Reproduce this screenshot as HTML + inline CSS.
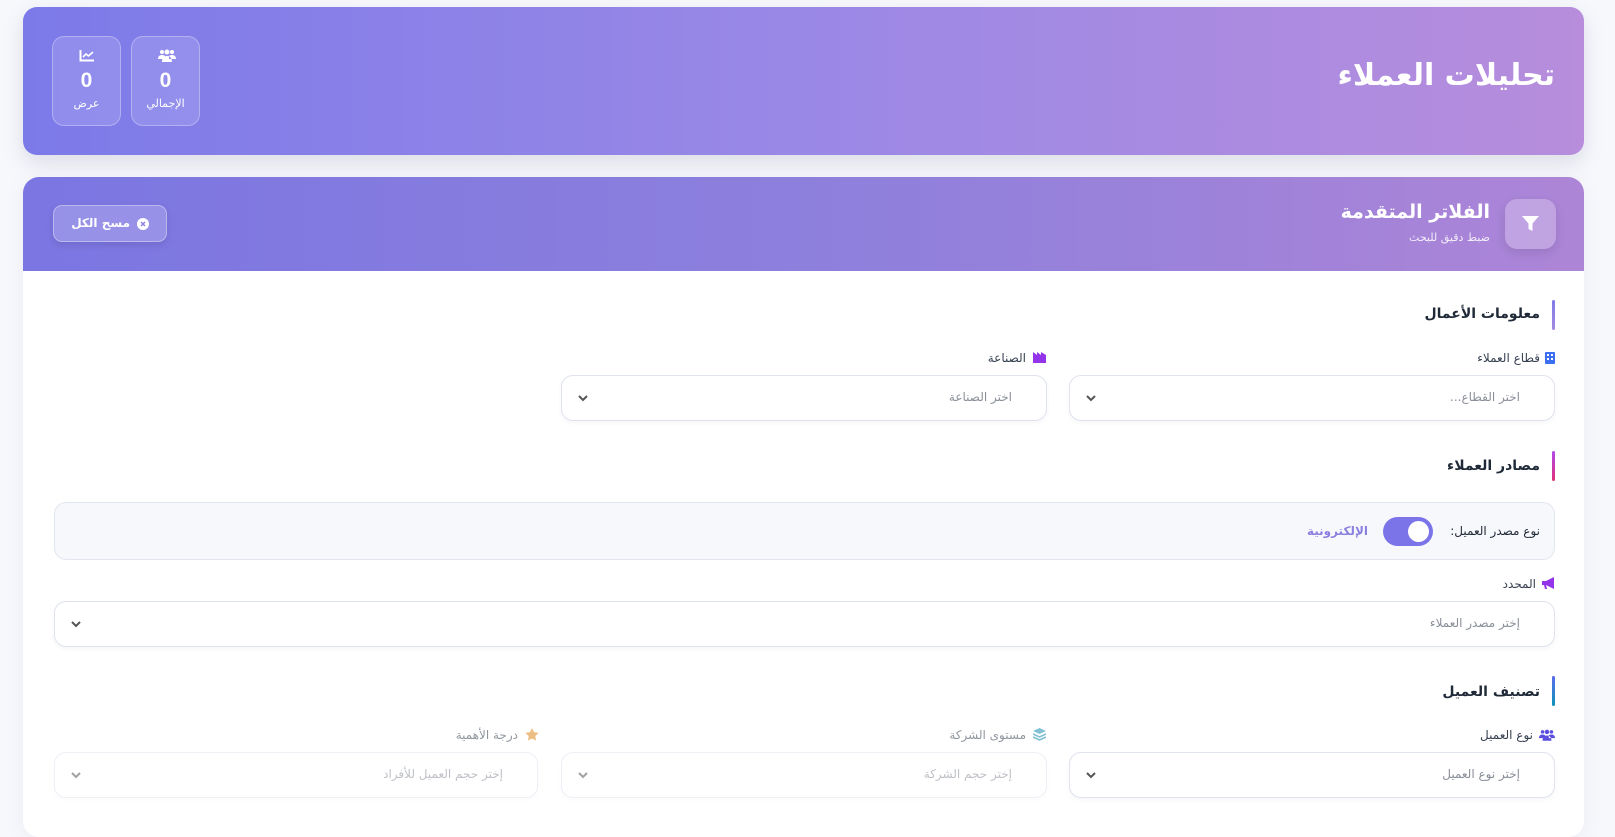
<!DOCTYPE html>
<html lang="ar" dir="rtl">
<head>
<meta charset="utf-8">
<style>
*{box-sizing:border-box;margin:0;padding:0}
body{width:1615px;height:810px;overflow:hidden;background:#f7f8fc;font-family:"DejaVu Sans","Liberation Sans",sans-serif;position:relative;color:#1f2937}
.abs{position:absolute}
.hdr{left:23px;top:7px;width:1561px;height:148px;border-radius:14px;background:linear-gradient(90deg,#7c7ae9 0%,#9a88e6 50%,#b78ddc 100%);box-shadow:0 8px 20px rgba(100,100,140,.18)}
.title{right:60px;top:58px;font-size:30px;font-weight:bold;color:#fff;direction:rtl}
.stat{top:36px;width:69px;height:90px;border-radius:12px;background:rgba(255,255,255,.14);border:1px solid rgba(255,255,255,.3);color:#fff;text-align:center}
.stat .n{position:absolute;top:32px;left:0;right:0;font-size:21px;font-weight:bold;font-family:"Liberation Sans",sans-serif}
.stat .l{position:absolute;top:60px;left:0;right:0;font-size:11px}
.stat svg{position:absolute;top:12px;left:26px}
.card{left:23px;top:177px;width:1561px;height:660px;border-radius:16px;background:#fff;overflow:hidden;box-shadow:0 4px 20px rgba(100,100,140,.08)}
.fh{left:0;top:0;width:1561px;height:94px;background:linear-gradient(90deg,#7b76e2 0%,#8f80dc 55%,#ad85d7 100%)}
.funnel{right:28px;top:22px;width:51px;height:50px;border-radius:12px;background:rgba(255,255,255,.25);box-shadow:0 4px 10px rgba(0,0,0,.1)}
.ft{right:94px;top:24px;font-size:19px;font-weight:bold;color:#fff}
.fs{right:94px;top:54px;font-size:11px;color:rgba(255,255,255,.85)}
.clr{left:30px;top:28px;width:114px;height:37px;border-radius:9px;background:rgba(255,255,255,.2);border:1px solid rgba(255,255,255,.35);color:#fff;font-size:12px;font-weight:bold;box-shadow:0 3px 8px rgba(0,0,0,.1)}
.sec{right:60px;font-size:14px;font-weight:bold;color:#1f2937}
.bar{left:1552px;width:3px;height:30px;border-radius:2px}
.lbl{font-size:12px;color:#374151;white-space:nowrap}
.sel{height:46px;width:486px;border:1px solid #dfe3ee;border-radius:12px;background:#fff;box-shadow:0 2px 4px rgba(100,110,160,.06)}
.sel .ph{position:absolute;right:34px;top:14px;font-size:12px;color:#8a8f99}
.sel .ch{position:absolute;left:16px;top:18px}
.dim{opacity:.55}
</style>
</head>
<body>
<div class="abs hdr"></div>
<div class="abs title">تحليلات العملاء</div>
<div class="abs stat" style="left:131px">
<svg width="18" height="13" viewBox="0 0 18 13"><circle cx="4" cy="3" r="2" fill="#fff"/><circle cx="14" cy="3" r="2" fill="#fff"/><circle cx="9" cy="3" r="2.5" fill="#fff"/><path d="M0 10c0-3 2-4 4-4s3 1 3 1v3zM18 10c0-3-2-4-4-4s-3 1-3 1v3zM4 13c0-4 2-6 5-6s5 2 5 6z" fill="#fff"/></svg>
<div class="n">0</div><div class="l">الإجمالي</div></div>
<div class="abs stat" style="left:52px">
<svg width="16" height="13" viewBox="0 0 16 13"><path d="M1.5 1v10.5H15" stroke="#fff" stroke-width="2" fill="none"/><path d="M4 8l3-3 2.5 2L14 3" stroke="#fff" stroke-width="1.6" fill="none"/></svg>
<div class="n">0</div><div class="l">عرض</div></div>

<div class="abs card">
<div class="abs fh"></div>
<div class="abs funnel"><svg style="position:absolute;left:17px;top:17px" width="17" height="16" viewBox="0 0 17 16"><path d="M0 0h17l-6.5 7.5V15l-4-2V7.5z" fill="#fff"/></svg></div>
<div class="abs ft">الفلاتر المتقدمة</div>
<div class="abs fs">ضبط دقيق للبحث</div>
<div class="abs clr"><svg style="position:absolute;right:17px;top:12px" width="12" height="12" viewBox="0 0 12 12"><circle cx="6" cy="6" r="6" fill="#fff"/><path d="M4 4l4 4M8 4l-4 4" stroke="#8a7fe0" stroke-width="1.4"/></svg><span style="position:absolute;right:36px;top:10px">مسح الكل</span></div>
</div>

<!-- section 1 -->
<div class="abs bar" style="top:300px;background:linear-gradient(#7f7be8,#a48be0)"></div>
<div class="abs sec" style="top:306px;right:75px">معلومات الأعمال</div>

<svg class="abs" style="left:1545px;top:352px" width="10" height="12" viewBox="0 0 10 12"><rect width="10" height="12" rx="1" fill="#3b6ef0"/><rect x="2" y="2" width="2" height="2" fill="#fff"/><rect x="6" y="2" width="2" height="2" fill="#fff"/><rect x="2" y="6" width="2" height="2" fill="#fff"/><rect x="6" y="6" width="2" height="2" fill="#fff"/></svg>
<div class="abs lbl" style="right:75px;top:351px">قطاع العملاء</div>
<div class="abs sel" style="left:1069px;top:375px"><span class="ph">اختر القطاع...</span><svg class="ch" width="10" height="8" viewBox="0 0 10 8"><path d="M1 2l4 4 4-4" stroke="#555" stroke-width="2" fill="none"/></svg></div>

<svg class="abs" style="left:1033px;top:352px" width="13" height="11" viewBox="0 0 13 11"><path d="M0 11V0l4 3V0l4 3V0l5 3v8z" fill="#9333ea"/></svg>
<div class="abs lbl" style="right:589px;top:351px">الصناعة</div>
<div class="abs sel" style="left:561px;top:375px"><span class="ph">اختر الصناعة</span><svg class="ch" width="10" height="8" viewBox="0 0 10 8"><path d="M1 2l4 4 4-4" stroke="#555" stroke-width="2" fill="none"/></svg></div>

<!-- section 2 -->
<div class="abs bar" style="top:451px;background:linear-gradient(#b04ae8,#e0307a)"></div>
<div class="abs sec" style="top:458px;right:75px">مصادر العملاء</div>

<div class="abs" style="left:54px;top:502px;width:1501px;height:58px;border:1px solid #e2e6ef;border-radius:12px;background:#f7f8fb"></div>
<div class="abs lbl" style="right:75px;top:524px;font-size:12px;color:#1f2937">نوع مصدر العميل:</div>
<div class="abs" style="left:1383px;top:517px;width:50px;height:29px;border-radius:15px;background:#7b74e8"><div style="position:absolute;right:4px;top:4px;width:21px;height:21px;border-radius:50%;background:#fff"></div></div>
<div class="abs lbl" style="right:247px;top:524px;color:#8b7fe0;font-weight:bold;font-size:12px">الإلكترونية</div>

<svg class="abs" style="left:1542px;top:577px" width="14" height="12" viewBox="0 0 14 12"><path d="M0 4h4l8-4v12L4 8H0zM2 8l1 4h2L4 8" fill="#9333ea"/></svg>
<div class="abs lbl" style="right:79px;top:577px">المحدد</div>
<div class="abs sel" style="left:54px;top:601px;width:1501px"><span class="ph">إختر مصدر العملاء</span><svg class="ch" width="10" height="8" viewBox="0 0 10 8"><path d="M1 2l4 4 4-4" stroke="#555" stroke-width="2" fill="none"/></svg></div>

<!-- section 3 -->
<div class="abs bar" style="top:676px;background:linear-gradient(#5a6cf0,#0e93b8)"></div>
<div class="abs sec" style="top:684px;right:75px">تصنيف العميل</div>

<svg class="abs" style="left:1539px;top:729px" width="16" height="12" viewBox="0 0 18 13"><circle cx="4" cy="3" r="2" fill="#5b4fe0"/><circle cx="14" cy="3" r="2" fill="#5b4fe0"/><circle cx="9" cy="3" r="2.5" fill="#5b4fe0"/><path d="M0 10c0-3 2-4 4-4s3 1 3 1v3zM18 10c0-3-2-4-4-4s-3 1-3 1v3zM4 13c0-4 2-6 5-6s5 2 5 6z" fill="#5b4fe0"/></svg>
<div class="abs lbl" style="right:82px;top:728px">نوع العميل</div>
<div class="abs sel" style="left:1069px;top:752px"><span class="ph">إختر نوع العميل</span><svg class="ch" width="10" height="8" viewBox="0 0 10 8"><path d="M1 2l4 4 4-4" stroke="#555" stroke-width="2" fill="none"/></svg></div>

<div class="dim">
<svg class="abs" style="left:1033px;top:728px" width="13" height="13" viewBox="0 0 13 13"><path d="M6.5 0L13 3 6.5 6 0 3z" fill="#1b8fb0"/><path d="M0 6l6.5 3L13 6M0 9l6.5 3L13 9" stroke="#1b8fb0" stroke-width="1.6" fill="none"/></svg>
<div class="abs lbl" style="right:589px;top:728px">مستوى الشركة</div>
<div class="abs sel" style="left:561px;top:752px"><span class="ph">إختر حجم الشركة</span><svg class="ch" width="10" height="8" viewBox="0 0 10 8"><path d="M1 2l4 4 4-4" stroke="#555" stroke-width="2" fill="none"/></svg></div>

<svg class="abs" style="left:525px;top:728px" width="14" height="13" viewBox="0 0 24 23"><path d="M12 0l3.6 7.4 8.1 1.2-5.9 5.7 1.4 8.1L12 18.6 4.8 22.4l1.4-8.1L.3 8.6l8.1-1.2z" fill="#e08a1e"/></svg>
<div class="abs lbl" style="right:1097px;top:728px">درجة الأهمية</div>
<div class="abs sel" style="left:54px;top:752px;width:484px"><span class="ph">إختر حجم العميل للأفراد</span><svg class="ch" width="10" height="8" viewBox="0 0 10 8"><path d="M1 2l4 4 4-4" stroke="#555" stroke-width="2" fill="none"/></svg></div>
</div>
</body>
</html>
